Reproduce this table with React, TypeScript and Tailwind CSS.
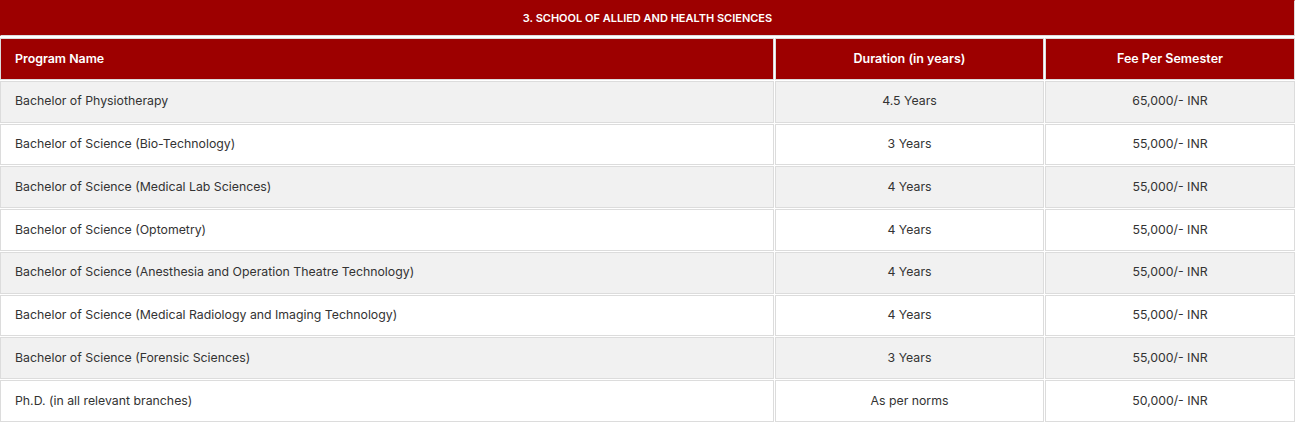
import React from "react";

const rows: [string, string, string][] = [
  ["Bachelor of Physiotherapy", "4.5 Years", "65,000/- INR"],
  ["Bachelor of Science (Bio-Technology)", "3 Years", "55,000/- INR"],
  ["Bachelor of Science (Medical Lab Sciences)", "4 Years", "55,000/- INR"],
  ["Bachelor of Science (Optometry)", "4 Years", "55,000/- INR"],
  ["Bachelor of Science (Anesthesia and Operation Theatre Technology)", "4 Years", "55,000/- INR"],
  ["Bachelor of Science (Medical Radiology and Imaging Technology)", "4 Years", "55,000/- INR"],
  ["Bachelor of Science (Forensic Sciences)", "3 Years", "55,000/- INR"],
  ["Ph.D. (in all relevant branches)", "As per norms", "50,000/- INR"],
];

export default function App() {
  return (
    <div
      className="w-[1296px] h-[423px] bg-white overflow-hidden"
      style={{ fontFamily: "Inter, 'Open Sans', sans-serif" }}
    >
      <div className="grid grid-cols-[774px_269px_250px] gap-px bg-white">
        <div className="col-span-3 h-[36px] w-[1295px] bg-[#9d0000] border border-[#dcdcdc] border-t-[#9d0000] border-l-[#9d0000] flex items-center justify-center text-white text-[11px] font-semibold">
          3. SCHOOL OF ALLIED AND HEALTH SCIENCES
        </div>
        <div className="h-[41.75px] mt-px bg-[#9d0000] border border-[#dcdcdc] flex items-center pl-[14px] text-white text-[12.4px] font-semibold">
          Program Name
        </div>
        <div className="h-[41.75px] mt-px bg-[#9d0000] border border-[#dcdcdc] flex items-center justify-center text-white text-[12.5px] font-semibold">
          Duration (in years)
        </div>
        <div className="h-[41.75px] mt-px bg-[#9d0000] border border-[#dcdcdc] flex items-center justify-center text-white text-[12.5px] font-semibold">
          Fee Per Semester
        </div>
        {rows.map((r, i) => {
          const bg = i % 2 === 0 ? "bg-[#f1f1f1]" : "bg-white";
          return (
            <React.Fragment key={i}>
              <div className={`h-[41.75px] ${bg} border border-[#dcdcdc] flex items-center pl-[14px] text-[#333] text-[12.3px]`}>
                {r[0]}
              </div>
              <div className={`h-[41.75px] ${bg} border border-[#dcdcdc] flex items-center justify-center text-[#333] text-[12.3px]`}>
                {r[1]}
              </div>
              <div className={`h-[41.75px] ${bg} border border-[#dcdcdc] flex items-center justify-center text-[#333] text-[12.3px]`}>
                {r[2]}
              </div>
            </React.Fragment>
          );
        })}
      </div>
    </div>
  );
}
